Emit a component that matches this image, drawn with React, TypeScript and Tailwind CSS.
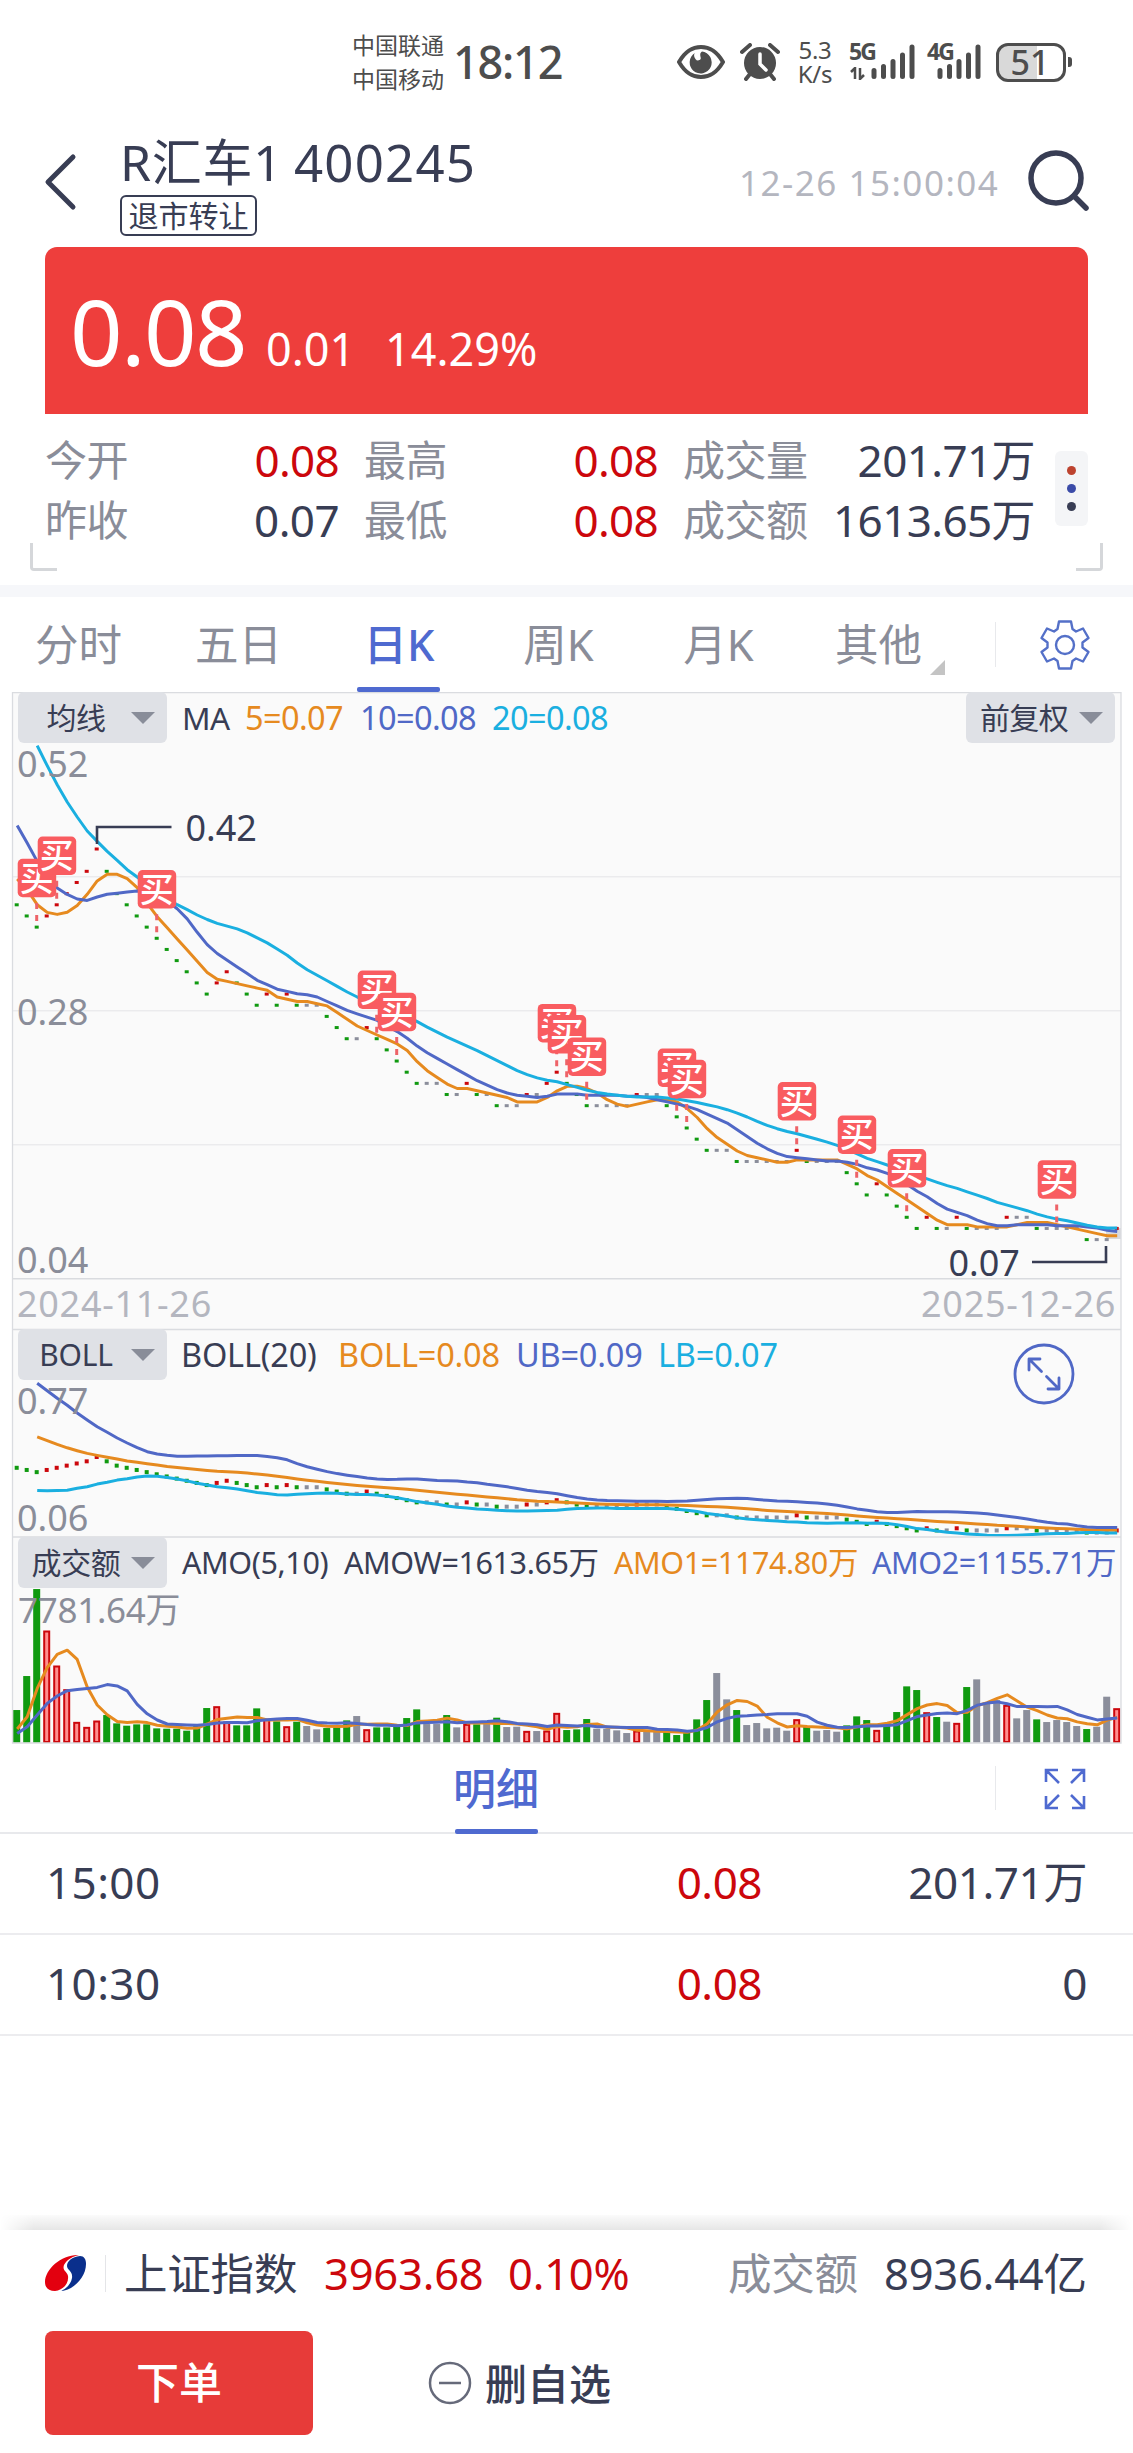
import React from 'react';

const GREEN = '#109a10';
const RED = '#cc070c';
const GRAY = '#8b8e9b';
const ORANGE = '#e68a1f';
const BLUE = '#5068c6';
const CYAN = '#1aafe0';

const STEP = 10;
const X0 = 16.7;

// Closing prices as cents below 0.42, one entry per bar.
const LEVELS = [
  5, 6, 7, 6, 5, 4, 3, 2, 0, 2, 4, 5, 6, 7, 8, 9, 10, 11, 12, 13, 12, 11, 12, 13, 14, 13, 14, 13, 14, 14, 14, 15, 16, 17,
  17, 16, 17, 18, 19, 20, 21, 21, 21, 22, 22, 21, 22, 22, 23, 23, 23, 22, 22, 21, 20, 21, 22, 23, 23, 23, 23, 23, 22, 22,
  22, 23, 24, 25, 26, 27, 27, 27, 28, 28, 28, 28, 28, 28, 27, 28, 28, 28, 28, 29, 30, 31, 30, 31, 32, 33, 34, 33, 34, 34,
  33, 34, 34, 34, 34, 33, 33, 33, 34, 34, 34, 34, 34, 35, 35, 35, 34,
];

const colorAt = (i: number) => {
  if (i < 3) return GREEN;
  const d = LEVELS[i] - LEVELS[i - 1];
  return d > 0 ? GREEN : d < 0 ? RED : GRAY;
};

// Turnover bar heights in thirds of a pixel.
const TURNOVER = [
  510, 408, 147, 272, 377, 448, 546, 561, 542, 525, 550, 557, 553, 553, 565, 566, 566, 572, 552, 504, 499, 545, 556, 556,
  505, 537, 544, 559, 545, 558, 568, 564, 562, 541, 528, 568, 562, 562, 558, 534, 508, 552, 552, 525, 562, 552, 553, 552,
  533, 561, 560, 573, 573, 572, 519, 570, 568, 537, 566, 566, 571, 579, 572, 572, 574, 576, 585, 577, 538, 480, 399, 478,
  510, 555, 549, 565, 563, 572, 538, 560, 572, 570, 575, 556, 529, 540, 570, 553, 516, 439, 450, 517, 531, 545, 549, 441,
  418, 487, 480, 495, 535, 510, 538, 546, 540, 546, 558, 567, 560, 470, 505,
].map((v) => (608 - v) / 3);

const BUYS = [2, 4, 14, 36, 38, 54, 55, 57, 66, 67, 78, 84, 89, 104];

const mean = (a: number[]) => a.reduce((s, v) => s + v, 0) / a.length;

const average = (data: number[], n: number, head: (number | null)[]) =>
  data.map((_, i) => (i < head.length ? head[i] : mean(data.slice(Math.max(0, i - n + 1), i + 1))));

const path = (values: (number | null)[], y: (v: number) => number) =>
  values
    .map((v, i) => (v === null ? null : `${X0 + 0.5 + i * STEP},${y(v).toFixed(1)}`))
    .filter(Boolean)
    .join(' ');

const fromY = (ys: (number | null)[]) => ys.map((y) => (y === null ? null : (y - 850) / 11.16));

const MA5 = average(LEVELS, 5, fromY([879.3, 890, 905, 912.7]));
const MA10 = average(LEVELS, 10, fromY([825.7, 843.3, 861.7, 876.7, 888.3, 894.7, 899.3, 900.7, 897.3]));
const MA20 = average(
  LEVELS,
  20,
  fromY([
    null, null, 746, 766, 785, 802.3, 817.3, 831.3, 841.7, 851.7, 860.7, 870, 877.3, 885, 892, 899, 905, 910, 915.3,
  ]),
);

const bollY = (v: number) => 1457 + v * 2.16;
const UB_HEAD = [190, 212, 235, 256, 279, 300, 320, 337, 354, 369, 383, 395, 402, 406, 409, 409, 408];
const UPPER = LEVELS.map((_, i) => {
  if (i < 2) return null;
  if (i < 19) return (1320 + UB_HEAD[i - 2] / 3 - 1457) / 2.16;
  const w = LEVELS.slice(i - 19, i + 1);
  const m = mean(w);
  return m - 2 * Math.sqrt(mean(w.map((v) => (v - m) ** 2)));
});
const LOWER = UPPER.map((u, i) => (u === null ? null : 2 * (MA20[i] as number) - u));

const third = (v: number) => (608 - v) / 3;
const AMO5 = average(TURNOVER, 5, [567, 530, 445, 383].map(third));
const AMO10 = average(TURNOVER, 10, [580, 560, 525, 490, 468, 452, 448, 445, 442].map(third));

function Line({ points, color }: { points: string; color: string }) {
  return <polyline points={points} fill="none" stroke={color} strokeWidth="3" strokeLinejoin="round" />;
}

const priceY = (v: number) => 849 + v * 11.16;

function PriceChart() {
  return (
    <svg className="absolute left-0 top-0" width="1133" height="637" viewBox="0 692 1133 637">
      <g stroke="#ebebed" strokeWidth="1.5">
        <path d="M13 876.7H1121M13 1010.7H1121M13 1144.7H1121" />
      </g>
      <path d="M13 1278.7H1121" stroke="#d9dbdf" strokeWidth="1.5" />
      <rect x="1106" y="1228" width="15" height="11" fill="#d8d9dc" />
      {LEVELS.map((v, i) => (
        <rect key={i} x={X0 - 2 + i * STEP} y={priceY(v) - 1.5} width="4" height="3" fill={colorAt(i)} />
      ))}
      <Line points={path(MA5, (v) => 849.7 + v * 11.16)} color={ORANGE} />
      <Line points={path(MA10, (v) => 849.7 + v * 11.16)} color={BLUE} />
      <Line points={path(MA20, (v) => 849.7 + v * 11.16)} color={CYAN} />
      <path d="M97 844V827H171.5M1032 1262H1106V1246" fill="none" stroke="#383d54" strokeWidth="2.6" />
      {BUYS.map((i) => {
        const x = X0 + i * STEP;
        const y = priceY(LEVELS[i]);
        return (
          <g key={i}>
            <path d={`M${x} ${y - 24}V${y - 18}M${x} ${y - 12}V${y - 6}`} stroke="#ee6368" strokeWidth="3" />
            <rect x={x - 19} y={y - 68.3} width="38.5" height="38.5" rx="5" fill="#f95c60" />
            <text x={x} y={y - 36.5} textAnchor="middle" fontSize="34" fontWeight="500" fill="#fff">
              买
            </text>
          </g>
        );
      })}
      <g fontSize="36" fill="#8a8d99">
        <text x="17" y="777">0.52</text>
        <text x="17" y="1025">0.28</text>
        <text x="17" y="1273">0.04</text>
      </g>
      <g fontSize="36" fill="#383d54">
        <text x="185.500" y="841">0.42</text>
        <text x="948.500" y="1276">0.07</text>
      </g>
    </svg>
  );
}

function BollChart() {
  return (
    <svg className="absolute left-0 top-0" width="1133" height="208" viewBox="0 1329 1133 208">
      {LEVELS.map((v, i) => (
        <rect key={i} x={X0 - 2 + i * STEP} y={bollY(v) - 2} width="4" height="4" fill={colorAt(i)} />
      ))}
      <Line points={path(MA20, bollY)} color={ORANGE} />
      <Line points={path(UPPER, bollY)} color={BLUE} />
      <Line points={path(LOWER, bollY)} color={CYAN} />
      <g fontSize="36" fill="#8a8d99">
        <text x="17" y="1414">0.77</text>
        <text x="17" y="1531">0.06</text>
      </g>
      <g fill="none" stroke="#5068c6" strokeWidth="2.8" strokeLinecap="round" strokeLinejoin="round">
        <circle cx="1044" cy="1374" r="29" />
        <path d="M1029 1370V1359H1040M1029 1359L1041.5 1371.5M1048 1389H1059V1378M1059 1389L1046.500 1376.500" />
      </g>
    </svg>
  );
}

function TurnoverChart() {
  return (
    <svg className="absolute left-0 top-0" width="1133" height="206" viewBox="0 1537 1133 206">
      {TURNOVER.map((h, i) => {
        const c = colorAt(i);
        const x = X0 - 3.5 + i * STEP;
        return c === RED ? (
          <rect key={i} x={x + 1} y={1743.5 - h} width="5" height={h - 1.5} fill="#ff8f8f" stroke={RED} strokeWidth="2" />
        ) : (
          <rect key={i} x={x} y={1742.7 - h} width="7" height={h} fill={c} />
        );
      })}
      <Line points={path(AMO5, (v) => 1742.7 - v)} color={ORANGE} />
      <Line points={path(AMO10, (v) => 1742.7 - v)} color={BLUE} />
      <text x="18" y="1622.500" fontSize="35" letterSpacing="-0.3" fill="#8a8d99">
        7781.64万
      </text>
    </svg>
  );
}

function Selector({ label }: { label: string }) {
  return (
    <div className="relative z-10 flex h-[51px] w-[149px] shrink-0 items-center justify-end rounded-[6px] bg-[#dfe1e6] pr-[12px]">
      <span className="flex-1 pl-[3px] text-center text-[30px] leading-[50px] text-[#383d54]">{label}</span>
      <svg width="24" height="12" viewBox="0 0 24 12">
        <path d="M0 0H24L12 12Z" fill="#898d99" />
      </svg>
    </div>
  );
}

function Stat({ label, value, red }: { label: string; value: string; red?: boolean }) {
  return (
    <div className="flex items-center justify-between">
      <span className="text-[42px] tracking-[-0.5px] text-[#8a8d99]">{label}</span>
      <span
        className={
          red ? 'text-[44px] tracking-[-0.7px] text-[#cc070c]' : 'text-[44px] tracking-[-0.6px] text-[#383d54]'
        }
      >
        {value}
      </span>
    </div>
  );
}

function Signal() {
  return (
    <svg width="44" height="38" viewBox="0 0 44 38" stroke="#4d4d4d" strokeWidth="5" strokeLinecap="round">
      <path d="M3 27.500V33.500M12.500 23.500V33.500M22 18.500V33.500M31.500 12V33.500M41 4V33.500" />
    </svg>
  );
}

function StatusBar() {
  return (
    <div className="flex h-[124px] items-center text-[#4d4d4d]">
      <div className="ml-[352px] w-[101px] text-[23px] leading-[34px]">
        <div>中国联通</div>
        <div>中国移动</div>
      </div>
      <div className="w-[224px] text-[45px] font-medium leading-[60px] tracking-[-1.2px]">18:12</div>
      <svg width="48" height="34" viewBox="0 0 48 34">
        <path d="M2 17C9 5 16 2 24 2S39 5 46 17C39 29 32 32 24 32S9 29 2 17Z" fill="none" stroke="#4d4d4d" strokeWidth="4" />
        <path d="M25 6.500C20 10 28 15 20 15.500C16 12 17 9 18 8A11 11 0 1 0 25 6.500Z" fill="#4d4d4d" />
      </svg>
      <svg className="ml-[15px]" width="40" height="38" viewBox="0 0 40 38">
        <circle cx="20" cy="20" r="16" fill="#4d4d4d" />
        <path d="M2 9L10 2M38 9L30 2M10 31L6 36M30 31L34 36" stroke="#4d4d4d" strokeWidth="4" strokeLinecap="round" />
        <path d="M20 11V21L26 27" stroke="#fff" strokeWidth="3.500" fill="none" strokeLinecap="round" />
      </svg>
      <div className="ml-[16px] w-[38px] text-center text-[24px] leading-[24px] tracking-[-0.3px]">
        <div>5.3</div>
        <div>K/s</div>
      </div>
      <div className="relative ml-[37px]">
        <Signal />
        <span className="absolute left-[-22px] top-[-5px] text-[23px] font-bold leading-[26px] tracking-[-2px]">5G</span>
        <svg className="absolute left-[-21px] top-[24px]" width="18" height="13" viewBox="0 0 18 13">
          <path d="M1 5L5 1V12M10 1V12L14 8" fill="none" stroke="#4d4d4d" strokeWidth="2.500" />
        </svg>
      </div>
      <div className="relative ml-[22px]">
        <Signal />
        <span className="absolute left-[-10px] top-[-5px] text-[23px] font-bold leading-[26px] tracking-[-2px]">4G</span>
      </div>
      <div className="relative ml-[15px] flex h-[39px] w-[70px] items-center justify-center rounded-[12px] border-[3px] border-[#4d4d4d] bg-[linear-gradient(90deg,#d9d9d9_60%,#fff_60%)] pr-[2px] text-[34px] font-medium leading-none">
        51
      </div>
      <div className="ml-[2px] h-[10px] w-[4px] rounded-r-[3px] bg-[#4d4d4d]" />
    </div>
  );
}

function Header() {
  return (
    <div className="flex h-[123px] items-start pl-[43px]">
      <svg className="mt-[29px]" width="34" height="58" viewBox="0 0 34 58">
        <path d="M30 4L5 29L30 54" fill="none" stroke="#383d54" strokeWidth="5" strokeLinecap="round" strokeLinejoin="round" />
      </svg>
      <div className="ml-[43px] w-[619px]">
        <div className="flex h-[71px] text-[50px] leading-[76px] text-[#383d54]">
          <span className="w-[174px] whitespace-nowrap tracking-[0.7px]">R汇车1</span>
          <span className="text-[51px] tracking-[1.2px]">400245</span>
        </div>
        <div className="flex h-[41px] w-[137px] items-center justify-center rounded-[6px] border-2 border-[#383d54] text-[30px] leading-none text-[#383d54]">
          退市转让
        </div>
      </div>
      <div className="mt-[27px] w-[289px] text-[35px] leading-[64px] tracking-[1.5px] text-[#b4b6bf]">
        12-26 15:00:04
      </div>
      <svg className="mt-[26px]" width="62" height="62" viewBox="0 0 62 62">
        <circle cx="28" cy="28" r="25" fill="none" stroke="#383d54" strokeWidth="5.500" />
        <path d="M46 46L58 58" stroke="#383d54" strokeWidth="5.500" strokeLinecap="round" />
      </svg>
    </div>
  );
}

function Quote() {
  return (
    <>
      <div className="mx-[45px] flex h-[167px] items-baseline rounded-t-[12px] bg-[#ee3e3c] pl-[25px] text-white">
        <span className="w-[196px] text-[92px] leading-[168px] tracking-[-1.6px]">0.08</span>
        <span className="w-[119px] text-[45px]">0.01</span>
        <span className="text-[45px]">14.29%</span>
      </div>
      <div className="relative flex h-[171px] pl-[45px] pt-[16px] leading-[60px]">
        <div className="w-[294px]">
          <Stat label="今开" value="0.08" red />
          <Stat label="昨收" value="0.07" />
        </div>
        <div className="ml-[25px] w-[294px]">
          <Stat label="最高" value="0.08" red />
          <Stat label="最低" value="0.08" red />
        </div>
        <div className="ml-[25px] w-[352px]">
          <Stat label="成交量" value="201.71万" />
          <Stat label="成交额" value="1613.65万" />
        </div>
        <div className="ml-[20px] mt-[21px] flex h-[75px] w-[33px] flex-col items-center justify-center gap-[9px] rounded-[6px] bg-[#f4f5f7]">
          <i className="size-[9px] rounded-full bg-[#bd432f]" />
          <i className="size-[9px] rounded-full bg-[#3b4ba8]" />
          <i className="size-[9px] rounded-full bg-[#383d54]" />
        </div>
        <div className="absolute left-[30px] top-[129px] h-[28px] w-[27px] rounded-bl-[4px] border-b-[3px] border-l-[3px] border-[#d5d7da]" />
        <div className="absolute left-[1076px] top-[129px] h-[28px] w-[27px] rounded-br-[4px] border-b-[3px] border-r-[3px] border-[#d5d7da]" />
      </div>
    </>
  );
}

function Tabs() {
  return (
    <div className="flex h-[95px] text-[43.500px] leading-[94px] text-[#8a8d99]">
      {['分时', '五日', '日K', '周K', '月K', '其他'].map((t) => (
        <div
          key={t}
          className={
            t === '日K'
              ? 'relative w-[160px] pr-[2px] text-center font-medium text-[#4f6ad0]'
              : 'relative w-[160px] pr-[3px] text-center'
          }
        >
          {t}
          {t === '日K' && <div className="absolute bottom-0 left-[37px] h-[5px] w-[83px] rounded-[2px] bg-[#4f6ad0]" />}
          {t === '其他' && (
            <svg className="absolute left-[130px] top-[63px]" width="15" height="15" viewBox="0 0 15 15">
              <path d="M15 0V15H0Z" fill="#c4c4c4" />
            </svg>
          )}
        </div>
      ))}
      <div className="ml-[35px] mt-[25px] h-[45px] w-px bg-[#e8e9ec]" />
      <svg className="ml-[43px] mt-[22px]" width="52" height="52" viewBox="-26 -26 52 52">
        <g fill="none" stroke="#5470c8" strokeWidth="2.400" strokeLinejoin="round">
          <path d="M-6 -23.500H6L7.500 -16L11 -13.500L18 -16.500L23.500 -7L17.500 -2.500V2.500L23.500 7L18 16.500L11 13.500L7.500 16L6 23.500H-6L-7.500 16L-11 13.500L-18 16.500L-23.500 7L-17.500 2.500V-2.500L-23.500 -7L-18 -16.500L-11 -13.500L-7.500 -16Z" />
          <circle r="9" />
        </g>
      </svg>
    </div>
  );
}

function Charts() {
  return (
    <div className="relative bg-[linear-gradient(90deg,transparent_12px,#fafafa_12px,#fafafa_1121px,transparent_1121px)] text-[#383d54]">
      <div className="relative h-[637px]">
        <PriceChart />
        <div className="relative flex h-[51px] items-center pl-[18px] text-[32.500px] leading-[49px] tracking-[-0.6px]">
          <Selector label="均线" />
          <span className="ml-[15px] w-[63px] text-[31.500px]">MA</span>
          <span className="w-[115px] text-[#e68a1f]">5=0.07</span>
          <span className="w-[132px] text-[#5068c6]">10=0.08</span>
          <span className="w-[474px] text-[#1aafe0]">20=0.08</span>
          <Selector label="前复权" />
        </div>
        <div className="relative mt-[537px] flex justify-between pl-[17px] pr-[17px] text-[36px] leading-[48px] tracking-[0.7px] text-[#b4b6bf]">
          <span>2024-11-26</span>
          <span>2025-12-26</span>
        </div>
      </div>
      <div className="relative h-[208px]">
        <BollChart />
        <div className="relative flex h-[51px] items-center pl-[18px] text-[32.500px] leading-[50px] tracking-[-0.2px]">
          <Selector label="BOLL" />
          <span className="ml-[14px] w-[157px]">BOLL(20)</span>
          <span className="w-[178px] text-[#e68a1f]">BOLL=0.08</span>
          <span className="w-[142px] text-[#5068c6]">UB=0.09</span>
          <span className="text-[#1aafe0]">LB=0.07</span>
        </div>
      </div>
      <div className="relative h-[206px]">
        <TurnoverChart />
        <div className="relative flex h-[51px] items-center whitespace-nowrap pl-[18px] text-[30.500px] leading-[49px] tracking-[-0.4px]">
          <Selector label="成交额" />
          <span className="ml-[15px] w-[162px]">AMO(5,10)</span>
          <span className="w-[270px]">AMOW=1613.65万</span>
          <span className="w-[258px] text-[#e68a1f]">AMO1=1174.80万</span>
          <span className="text-[#5068c6]">AMO2=1155.71万</span>
        </div>
      </div>
      <svg className="pointer-events-none absolute left-0 top-0" width="1133" height="1052" viewBox="0 0 1133 1052">
        <path d="M12.500 0.500H1121V1051H12.500ZM12.500 637.500H1121M12.500 845H1121" fill="none" stroke="#dadce0" strokeWidth="1.300" />
      </svg>
    </div>
  );
}

function Trade({ time, price, volume }: { time: string; price: string; volume: string }) {
  return (
    <div className="flex h-[101px] items-start border-b-2 border-[#ececef] pl-[46px] pr-[46px] text-[44px] leading-[97px] text-[#383d54]">
      <span className="w-[400px] tracking-[0.4px]">{time}</span>
      <span className="w-[316px] text-right tracking-[-0.5px] text-[#cc070c]">{price}</span>
      <span className="flex-1 text-right tracking-[-0.4px]">{volume}</span>
    </div>
  );
}

function Footer() {
  return (
    <div className="bg-white">
      <div className="flex h-[86px] items-center pl-[44px] text-[43.500px] leading-[84px] tracking-[-0.2px] text-[#383d54]">
        <svg width="43" height="38" viewBox="0 0 43 38">
          <path d="M35 1C18 0 1 15 1 28C1 34 5 37 11 37C19 36 25 30 24 22C23 17 18 17 20 11C23 5 30 2 35 1Z" fill="#e3000f" />
          <path d="M36 2C28 3 23 7 23 12C23 16 29 17 28 24C27 30 22 35 17 37C30 36 42 23 42 10C42 5 40 2 36 2Z" fill="#0a2f8c" />
        </svg>
        <div className="ml-[18px] h-[37px] w-px bg-[#e4e5e8]" />
        <span className="ml-[18px] w-[200px]">上证指数</span>
        <span className="w-[184px] text-[#cc070c]">3963.68</span>
        <span className="w-[220px] text-[#cc070c]">0.10%</span>
        <span className="w-[156px] text-[#8a8d99]">成交额</span>
        <span>8936.44亿</span>
      </div>
      <div className="flex items-center pl-[45px] pt-[15px]">
        <button className="h-[104px] w-[268px] rounded-[8px] bg-[#e73b39] text-[43px] font-medium text-white">下单</button>
        <svg className="ml-[115px]" width="44" height="44" viewBox="0 0 44 44">
          <g fill="none" stroke="#666a7a" strokeWidth="2.500">
            <circle cx="22" cy="22" r="20" />
            <path d="M11 22H33" />
          </g>
        </svg>
        <span className="ml-[13px] text-[42px] font-medium text-[#383d54]">删自选</span>
      </div>
    </div>
  );
}

export default function App() {
  return (
    <div
      lang="zh-CN"
      className="h-[2453px] w-[1133px] overflow-hidden bg-white font-['Noto_Sans','Noto_Sans_CJK_SC',sans-serif]"
    >
      <StatusBar />
      <Header />
      <Quote />
      <div className="h-[12px] bg-[#f6f7fa]" />
      <Tabs />
      <Charts />
      <div className="flex h-[91px] border-b-2 border-[#e8e9ec]">
        <div className="relative ml-[455px] w-[83px] whitespace-nowrap text-[43px] font-medium leading-[92px] text-[#4f6ad0]">
          <span className="-ml-[2px]">明细</span>
          <div className="absolute -bottom-[2px] left-0 h-[5px] w-[83px] rounded-[2px] bg-[#4f6ad0]" />
        </div>
        <div className="ml-[457px] mt-[23px] h-[44px] w-px bg-[#e8e9ec]" />
        <svg className="ml-[48px] mt-[25px]" width="42" height="42" viewBox="0 0 42 42">
          <path
            d="M2 14V2H14M2 2L15 15M28 2H40V14M40 2L27 15M2 28V40H14M2 40L15 27M40 28V40H28M40 40L27 27"
            fill="none"
            stroke="#4f6ad0"
            strokeWidth="2.600"
          />
        </svg>
      </div>
      <Trade time="15:00" price="0.08" volume="201.71万" />
      <Trade time="10:30" price="0.08" volume="0" />
      <div className="mt-[179px] h-[15px] bg-[linear-gradient(180deg,#fbfbfb,#e6e6e6)] [mask-image:linear-gradient(90deg,transparent,#000_3%,#000_97%,transparent)]" />
      <Footer />
    </div>
  );
}
